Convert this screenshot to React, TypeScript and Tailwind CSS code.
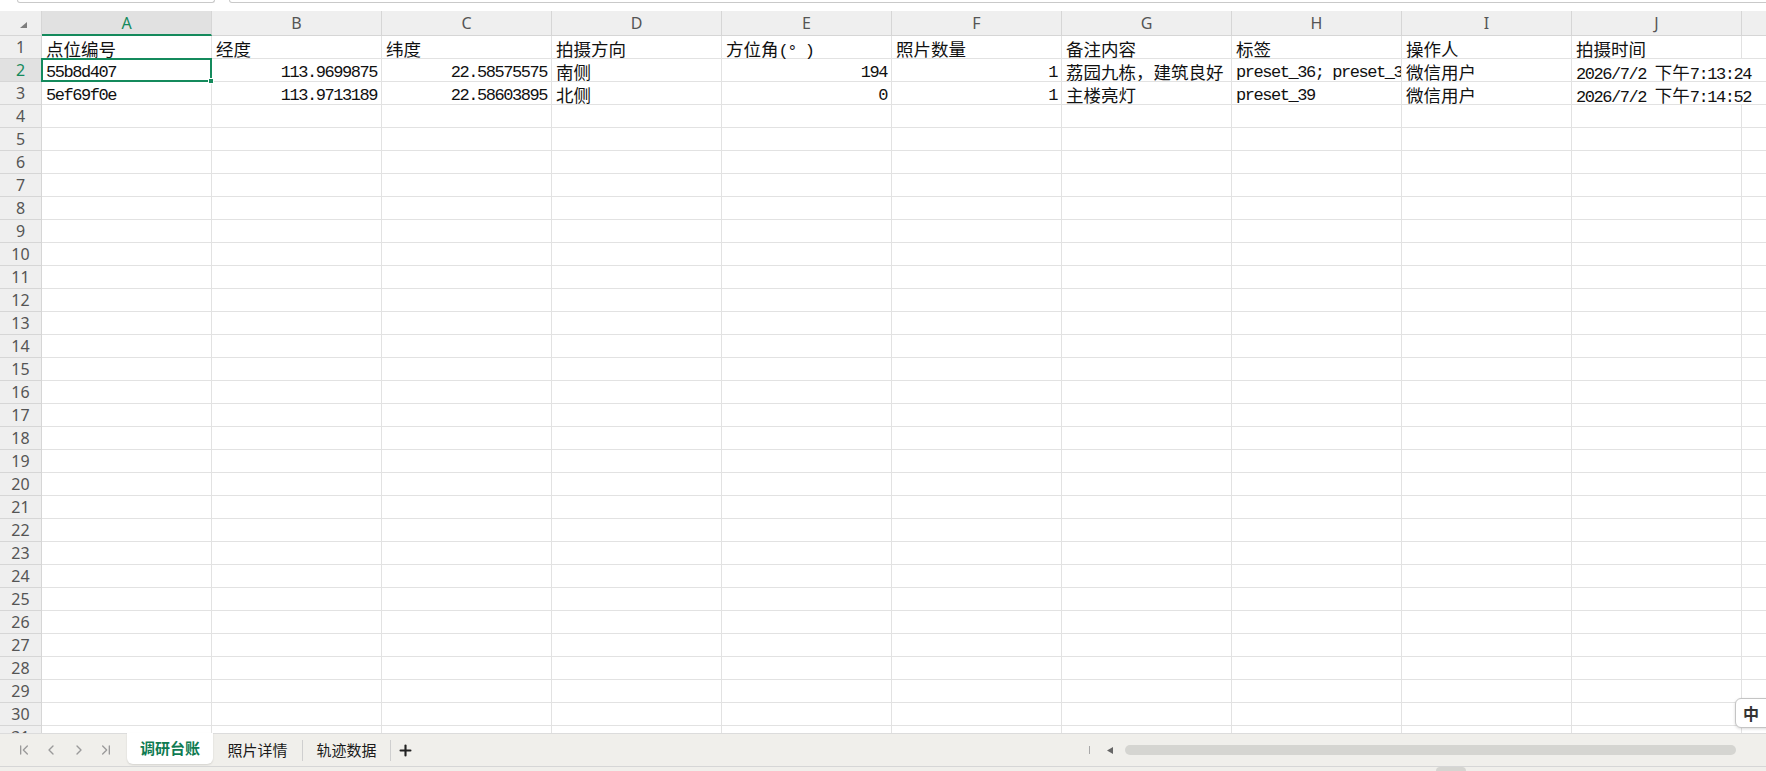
import { ChevronFirst, ChevronLast, ChevronLeft, ChevronRight, Plus } from "lucide-react";

type Cell = { v: string; r?: boolean };

const COLS = ["A", "B", "C", "D", "E", "F", "G", "H", "I", "J", ""];

const DATA: Cell[][] = [
  [
    { v: "点位编号" },
    { v: "经度" },
    { v: "纬度" },
    { v: "拍摄方向" },
    { v: "方位角(° )" },
    { v: "照片数量" },
    { v: "备注内容" },
    { v: "标签" },
    { v: "操作人" },
    { v: "拍摄时间" },
  ],
  [
    { v: "55b8d407" },
    { v: "113.9699875", r: true },
    { v: "22.58575575", r: true },
    { v: "南侧" },
    { v: "194", r: true },
    { v: "1", r: true },
    { v: "荔园九栋，建筑良好" },
    { v: "preset_36; preset_39" },
    { v: "微信用户" },
    { v: "2026/7/2 下午7:13:24" },
  ],
  [
    { v: "5ef69f0e" },
    { v: "113.9713189", r: true },
    { v: "22.58603895", r: true },
    { v: "北侧" },
    { v: "0", r: true },
    { v: "1", r: true },
    { v: "主楼亮灯" },
    { v: "preset_39" },
    { v: "微信用户" },
    { v: "2026/7/2 下午7:14:52" },
  ],
];

const ROW_COUNT = 31;

// SimSun-ish: half-width latin runs, full-width CJK runs
function Mixed({ text }: { text: string }) {
  const parts = text.split(/([\x20-\x7E\u00B0]+)/).filter(Boolean);
  return (
    <>
      {parts.map((p, i) =>
        /^[\x20-\x7E\u00B0]+$/.test(p) ? (
          <span
            key={i}
            className="inline-block font-['Liberation_Mono',monospace] text-[17px] leading-[19px] tracking-[-1.45px]"
          >
            {p}
          </span>
        ) : (
          <span key={i} className="inline-block font-['Noto_Sans_CJK_SC',sans-serif] text-[17.5px] leading-[19px]">
            {p}
          </span>
        )
      )}
    </>
  );
}

function SheetGrid() {
  const rows = Array.from({ length: ROW_COUNT }, (_, i) => i + 1);
  return (
    <div className="grid grid-cols-[42px_repeat(11,170px)] grid-rows-[25px_repeat(31,23px)]">
      <div className="flex border-r border-b border-[#d6d6d6] bg-[#efefef] pl-[20px] pt-[11px]">
        <svg width="7" height="6" viewBox="0 0 7 6">
          <polygon points="7,0 7,6 0,6" fill="#7d7d7d" />
        </svg>
      </div>
      {COLS.map((c, i) => (
        <div
          key={"h" + i}
          className={
            i === 0
              ? "flex items-center justify-center border-r border-[#d6d6d6] border-b-2 border-b-[#148a5c] bg-[#e1e1e1] font-['Noto_Sans',sans-serif] text-[16px] text-[#148a5c]"
              : "flex items-center justify-center border-r border-b border-[#d6d6d6] bg-[#efefef] font-['Noto_Sans',sans-serif] text-[16px] text-[#555]"
          }
        >
          {c}
        </div>
      ))}
      {rows.map((n) => {
        const data = DATA[n - 1];
        return [
          <div
            key={"r" + n}
            className={
              n === 2
                ? "flex items-center justify-center border-r border-b border-[#d6d6d6] bg-[#e1e1e1] font-['Noto_Sans',sans-serif] text-[16px] text-[#148a5c]"
                : "flex items-center justify-center border-r border-b border-[#d6d6d6] bg-[#efefef] font-['Noto_Sans',sans-serif] text-[16px] text-[#555]"
            }
          >
            {n}
          </div>,
          ...COLS.map((_, ci) => {
            const cell = data ? data[ci] : undefined;
            const overflowJ = ci === 9 && n > 1 && n <= 3;
            const selected = n === 2 && ci === 0;
            const clipped = n === 2 && ci === 7;
            return (
              <div
                key={n + "-" + ci}
                className={
                  (overflowJ
                    ? "relative z-[1] border-b border-[#e2e2e2]"
                    : selected
                      ? "relative z-[2] border-r border-b border-[#e2e2e2]"
                      : clipped
                        ? "relative overflow-hidden border-r border-b border-[#e2e2e2]"
                        : "relative border-r border-b border-[#e2e2e2]") +
                  (cell?.r ? " text-right" : " text-left") +
                  " whitespace-pre px-[4px] pt-[3px] leading-[19px] text-[#111]"
                }
              >
                {cell && <Mixed text={cell.v} />}
                {selected && (
                  <div className="pointer-events-none absolute -top-px -left-px -right-px -bottom-px">
                    <div className="absolute inset-0 border-2 border-[#148a5c]" />
                    <div className="absolute -right-[2px] -bottom-[2px] h-[6px] w-[6px] border border-white bg-[#148a5c]" />
                  </div>
                )}
              </div>
            );
          }),
        ];
      })}
    </div>
  );
}

function TabBar() {
  return (
    <div className="flex h-[33px] items-center border-t border-[#dcdcdc] bg-[#f0efeb] font-['Noto_Sans_CJK_SC',sans-serif]">
      <div className="flex items-center pl-[10px] text-[#9a9a9a]">
        <div className="flex w-[27.5px] justify-center">
          <ChevronFirst size={16} strokeWidth={2} />
        </div>
        <div className="flex w-[27.5px] justify-center">
          <ChevronLeft size={16} strokeWidth={2} />
        </div>
        <div className="flex w-[27.5px] justify-center">
          <ChevronRight size={16} strokeWidth={2} />
        </div>
        <div className="flex w-[27.5px] justify-center">
          <ChevronLast size={16} strokeWidth={2} />
        </div>
      </div>
      <div className="-mt-px mb-[2px] ml-[7px] flex w-[86px] items-center justify-center self-stretch rounded-b-[6px] bg-white text-[15px] font-bold text-[#0f7b52] shadow-[0_1px_2px_rgba(0,0,0,0.12)]">
        调研台账
      </div>
      <div className="flex w-[89px] items-center justify-center text-[15px] text-[#1a1a1a]">照片详情</div>
      <div className="h-[21px] w-px bg-[#cfcfcf]" />
      <div className="flex w-[87px] items-center justify-center text-[15px] text-[#1a1a1a]">轨迹数据</div>
      <div className="h-[21px] w-px bg-[#cfcfcf]" />
      <div className="ml-[6px] flex text-[#222]">
        <Plus size={17} strokeWidth={3} />
      </div>
      <div className="flex-1" />
      <div className="flex items-center pr-[30px]">
        <div className="h-[8px] w-px bg-[#a8a8a8]" />
        <svg className="ml-[17px]" width="6" height="7" viewBox="0 0 6 7">
          <polygon points="6,0 6,7 0,3.5" fill="#666" />
        </svg>
        <div className="ml-[12px] h-[10px] w-[611px] rounded-full bg-[#d5d5d1]" />
      </div>
    </div>
  );
}

export default function App() {
  return (
    <div className="relative flex h-[771px] w-[1766px] flex-col overflow-hidden bg-white">
      <div className="flex h-[11px] shrink-0 items-start gap-[14px] bg-white pl-[17px]">
        <div className="h-[3px] w-[198px] rounded-b-[6px] border border-t-0 border-[#c9c9c9]" />
        <div className="-mr-[12px] h-[3px] flex-1 rounded-b-[6px] border border-t-0 border-[#c9c9c9]" />
      </div>
      <div className="h-[722px] shrink-0 overflow-hidden">
        <SheetGrid />
      </div>
      <TabBar />
      <div className="flex h-[5px] shrink-0 items-end border-t border-[#d6d6d6] bg-[#f0efeb] pl-[1436px]">
        <div className="h-[4px] w-[30px] rounded-t-full bg-[#d5d5d1]" />
      </div>
      <div className="absolute left-[1735px] top-[698px] flex h-[30px] w-[60px] items-center gap-[5px] rounded-[6px] border border-[#c4c4c4] bg-white pl-[7px] font-['Noto_Sans_CJK_SC',sans-serif] text-[16px] font-bold text-[#333] shadow-[0_1px_3px_rgba(0,0,0,0.15)]">
        中<span className="text-[12px]">•</span>
      </div>
    </div>
  );
}
